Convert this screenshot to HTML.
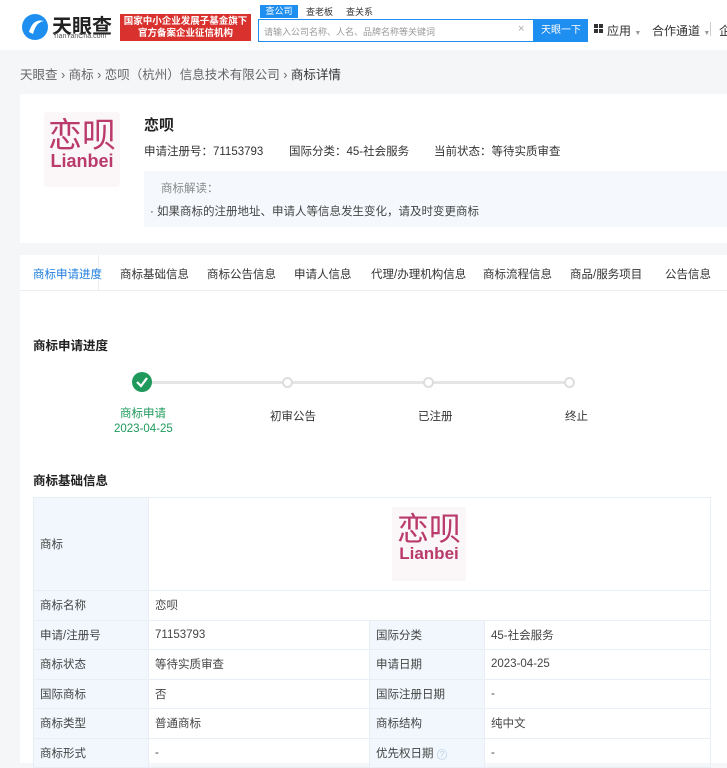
<!DOCTYPE html>
<html><head><meta charset="utf-8"><style>
*{margin:0;padding:0;box-sizing:border-box}
body{width:727px;height:763px;overflow:hidden;background:#f5f6f8;font-family:"Liberation Sans","Noto Sans CJK SC",sans-serif;font-size:12px;color:#333;position:relative}
.a{position:absolute;white-space:nowrap}
.logo{font-family:"Noto Sans CJK SC",sans-serif;color:#b93a6b;text-align:center;line-height:1}
table{border-collapse:collapse;position:absolute;left:33px;top:497px;width:678px}
td{border:1px solid #e8eef5;height:29.5px;padding-left:6px;font-size:11.5px;color:#444;vertical-align:middle}
td.l{background:#f1f7fd;width:115px}
</style></head><body>
<div class="a" style="left:0;top:0;width:727px;height:50px;background:#fff"></div>
<svg class="a" style="left:20px;top:12px" width="30" height="30" viewBox="0 0 30 30"><circle cx="15" cy="15" r="13" fill="#1e8ef0"/><path d="M9 20 Q13 6 24 9 Q16 10 13 22Z" fill="#fff"/></svg>
<div class="a" style="left:52px;top:10px;font-size:20px;font-weight:bold;color:#222">天眼查</div>
<div class="a" style="left:53px;top:33px;font-size:7px;color:#555">TianYanCha.com</div>
<div class="a" style="left:120px;top:14px;width:131px;height:27px;background:#d9312d;color:#fff;font-size:9.5px;line-height:12px;padding:2px 3px;font-weight:bold;text-align:center;overflow:hidden">国家中小企业发展子基金旗下<br>官方备案企业征信机构</div>
<div class="a" style="left:260px;top:5px;width:38px;height:13px;background:#1e8ef0;color:#fff;font-size:9px;text-align:center;line-height:13px">查公司</div>
<div class="a" style="left:306px;top:5px;font-size:9px;color:#333">查老板</div>
<div class="a" style="left:346px;top:5px;font-size:9px;color:#333">查关系</div>
<div class="a" style="left:258px;top:19px;width:276px;height:23px;border:1.5px solid #1e8ef0;background:#fff"></div>
<div class="a" style="left:264px;top:25px;font-size:9px;color:#999">请输入公司名称、人名、品牌名称等关键词</div>
<div class="a" style="left:518px;top:23px;font-size:11px;color:#aaa">×</div>
<div class="a" style="left:534px;top:19px;width:54px;height:23px;background:#1e8ef0;color:#fff;font-size:10px;text-align:center;line-height:23px">天眼一下</div>
<div class="a" style="left:594px;top:24px;width:9px;height:9px;background:linear-gradient(#333,#333) 0 0/4px 4px no-repeat,linear-gradient(#333,#333) 5px 0/4px 4px no-repeat,linear-gradient(#333,#333) 0 5px/4px 4px no-repeat,linear-gradient(#333,#333) 5px 5px/4px 4px no-repeat"></div>
<div class="a" style="left:607px;top:22px;font-size:12px">应用 <span style="font-size:7px;color:#999">▼</span></div>
<div class="a" style="left:652px;top:22px;font-size:12px">合作通道 <span style="font-size:7px;color:#999">▼</span></div>
<div class="a" style="left:710px;top:22px;width:1px;height:14px;background:#ccc"></div>
<div class="a" style="left:719px;top:22px;font-size:12px">企</div>
<div class="a" style="left:20px;top:64px;font-size:12.5px;color:#666">天眼查 › 商标 › 恋呗（杭州）信息技术有限公司 › <span style="color:#333">商标详情</span></div>
<div class="a" style="left:20px;top:94px;width:707px;height:149px;background:#fff"></div>
<div class="a logo" style="left:44px;top:112px;width:76px;height:75px;background:#fbf7f8;border-radius:3px"><div style="font-size:34px;margin-top:4px">恋呗</div><div style="font-size:18px;font-weight:bold;font-family:'Liberation Sans',sans-serif;margin-top:2px">Lianbei</div></div>
<div class="a" style="left:144px;top:114px;font-size:15px;font-weight:bold;color:#222">恋呗</div>
<div class="a" style="left:144px;top:143px;font-size:11.5px">申请注册号：71153793</div>
<div class="a" style="left:289px;top:143px;font-size:11.5px">国际分类：45-社会服务</div>
<div class="a" style="left:434px;top:143px;font-size:11.5px">当前状态：等待实质审查</div>
<div class="a" style="left:144px;top:171px;width:583px;height:56px;background:#f5f9fd"></div>
<div class="a" style="left:161px;top:180px;font-size:11.5px;color:#888">商标解读：</div>
<div class="a" style="left:150px;top:203px;font-size:11.5px;color:#444">· 如果商标的注册地址、申请人等信息发生变化，请及时变更商标</div>
<div class="a" style="left:20px;top:255px;width:707px;height:508px;background:#fff"></div>
<div class="a" style="left:20px;top:290px;width:707px;height:1px;background:#eee"></div>
<div class="a" style="left:98px;top:255px;width:1px;height:35px;background:#eee"></div>
<div class="a" style="left:33px;top:266px;font-size:11.5px;color:#1e7ee0">商标申请进度</div>
<div class="a" style="left:120px;top:266px;font-size:11.5px">商标基础信息</div>
<div class="a" style="left:207px;top:266px;font-size:11.5px">商标公告信息</div>
<div class="a" style="left:294px;top:266px;font-size:11.5px">申请人信息</div>
<div class="a" style="left:371px;top:266px;font-size:11.5px">代理/办理机构信息</div>
<div class="a" style="left:483px;top:266px;font-size:11.5px">商标流程信息</div>
<div class="a" style="left:570px;top:266px;font-size:11.5px">商品/服务项目</div>
<div class="a" style="left:665px;top:266px;font-size:11.5px">公告信息</div>
<div class="a" style="left:33px;top:335px;font-size:12.5px;font-weight:bold;color:#222">商标申请进度</div>
<div class="a" style="left:150px;top:381px;width:420px;height:3px;background:#e5e5e5"></div>
<svg class="a" style="left:131px;top:371px" width="22" height="22"><circle cx="11" cy="11" r="10" fill="#1f9a5c"/><path d="M6 11 L10 15 L16 7" stroke="#fff" stroke-width="2.2" fill="none"/></svg>
<div class="a" style="left:282px;top:377px;width:11px;height:11px;border-radius:50%;border:2px solid #ddd;background:#fff"></div>
<div class="a" style="left:423px;top:377px;width:11px;height:11px;border-radius:50%;border:2px solid #ddd;background:#fff"></div>
<div class="a" style="left:564px;top:377px;width:11px;height:11px;border-radius:50%;border:2px solid #ddd;background:#fff"></div>
<div class="a" style="left:120px;top:405px;font-size:11.5px;color:#1f9a5c">商标申请</div>
<div class="a" style="left:114px;top:423px;font-size:11.5px;color:#1f9a5c">2023-04-25</div>
<div class="a" style="left:270px;top:408px;font-size:11.5px">初审公告</div>
<div class="a" style="left:418px;top:408px;font-size:11.5px">已注册</div>
<div class="a" style="left:565px;top:408px;font-size:11.5px">终止</div>
<div class="a" style="left:33px;top:470px;font-size:12.5px;font-weight:bold;color:#222">商标基础信息</div>
<table>
<tr><td class="l" style="height:93px">商标</td><td colspan="3"><div class="logo" style="margin:0 auto 0 237px;width:74px;height:74px;background:#fbf7f8"><div style="font-size:32px;padding-top:4px">恋呗</div><div style="font-size:17px;font-weight:bold;font-family:'Liberation Sans',sans-serif;margin-top:2px">Lianbei</div></div></td></tr>
<tr><td class="l">商标名称</td><td colspan="3">恋呗</td></tr>
<tr><td class="l">申请/注册号</td><td style="width:221px">71153793</td><td class="l">国际分类</td><td>45-社会服务</td></tr>
<tr><td class="l">商标状态</td><td>等待实质审查</td><td class="l">申请日期</td><td>2023-04-25</td></tr>
<tr><td class="l">国际商标</td><td>否</td><td class="l">国际注册日期</td><td>-</td></tr>
<tr><td class="l">商标类型</td><td>普通商标</td><td class="l">商标结构</td><td>纯中文</td></tr>
<tr><td class="l">商标形式</td><td>-</td><td class="l">优先权日期 <span style="color:#bcd;border:1px solid #cde;border-radius:50%;font-size:8px;padding:0 2px">?</span></td><td>-</td></tr>
</table>
</body></html>
